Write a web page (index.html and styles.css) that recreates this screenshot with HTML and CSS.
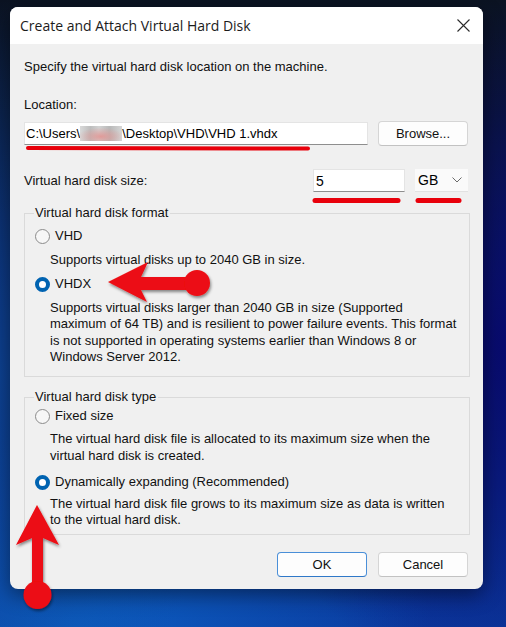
FILE: index.html
```html
<!DOCTYPE html>
<html>
<head>
<meta charset="utf-8">
<title>Create and Attach Virtual Hard Disk</title>
<link rel="stylesheet" href="styles.css">
</head>
<body>
<div class="desktop">
  <div class="dialog">
    <div class="titlebar">
      <span class="title">Create and Attach Virtual Hard Disk</span>
      <svg class="close" width="13" height="13" viewBox="0 0 13 13"><path d="M0.5 0.5 L12.5 12.5 M12.5 0.5 L0.5 12.5" stroke="#2b2b2b" stroke-width="1.1" fill="none"/></svg>
    </div>
    <div class="content">
      <p class="intro">Specify the virtual hard disk location on the machine.</p>
      <div class="label loc-label">Location:</div>
      <div class="row loc-row">
        <div class="input loc-input">C:\Users\<span class="blur"></span>\Desktop\VHD\VHD 1.vhdx</div>
        <button class="btn browse">Browse...</button>
      </div>
      <div class="row size-row">
        <span class="label size-label">Virtual hard disk size:</span>
        <div class="input size-input">5</div>
        <div class="select">GB<svg class="chev" width="10" height="6" viewBox="0 0 10 6"><path d="M0.5 0.5 L5 5 L9.5 0.5" stroke="#6a6a6a" stroke-width="1" fill="none"/></svg></div>
      </div>
      <fieldset class="group g1">
        <legend>Virtual hard disk format</legend>
        <div class="radio"><span class="dot"></span><span>VHD</span></div>
        <p class="desc d-vhd">Supports virtual disks up to 2040 GB in size.</p>
        <div class="radio r-vhdx"><span class="dot on"></span><span>VHDX</span></div>
        <p class="desc d-vhdx">Supports virtual disks larger than 2040 GB in size (Supported<br>maximum of 64 TB) and is resilient to power failure events. This format<br>is not supported in operating systems earlier than Windows 8 or<br>Windows Server 2012.</p>
      </fieldset>
      <fieldset class="group g2">
        <legend>Virtual hard disk type</legend>
        <div class="radio"><span class="dot"></span><span>Fixed size</span></div>
        <p class="desc d-fixed">The virtual hard disk file is allocated to its maximum size when the<br>virtual hard disk is created.</p>
        <div class="radio r-dyn"><span class="dot on"></span><span>Dynamically expanding (Recommended)</span></div>
        <p class="desc d-dyn">The virtual hard disk file grows to its maximum size as data is written<br>to the virtual hard disk.</p>
      </fieldset>
      <div class="buttons">
        <button class="btn ok">OK</button>
        <button class="btn">Cancel</button>
      </div>
    </div>
  </div>
  <svg class="annot" width="506" height="627" viewBox="0 0 506 627">
    <defs>
      <filter id="sh" x="-20%" y="-20%" width="140%" height="140%">
        <feDropShadow dx="1" dy="2" stdDeviation="1.6" flood-color="#000" flood-opacity="0.45"/>
      </filter>
    </defs>
    <g stroke="#e8000b" stroke-linecap="round" fill="none">
      <path d="M28 148 L308 148.5" stroke-width="4"/>
      <path d="M315 200.5 L398 200.5" stroke-width="5"/>
      <path d="M418 200.5 L459 200.5" stroke-width="5"/>
    </g>
    <g fill="#ec0a12" filter="url(#sh)">
      <polygon points="108,282 148,262 141,277 197,277 197,290 141,290 147,302"/>
      <circle cx="197" cy="283" r="13"/>
      <polygon points="37,505 59,545 43,538 43,595 32,595 32,538 16,545"/>
      <circle cx="37.5" cy="595" r="14"/>
    </g>
  </svg>
</div>
</body>
</html>
```

FILE: styles.css
```css
html, body {
  margin: 0;
  padding: 0;
}

body {
  width: 506px;
  height: 627px;
  overflow: hidden;
  font-family: "Liberation Sans", Arial, sans-serif;
  background:
    radial-gradient(ellipse 55% 55% at 100% 55%, rgba(8, 6, 110, 0.85) 0%, rgba(8, 6, 110, 0) 100%),
    radial-gradient(ellipse 45% 60% at 0% 60%, rgba(14, 70, 150, 0.85) 0%, rgba(14, 70, 150, 0) 100%),
    radial-gradient(ellipse 70% 40% at 15% 100%, rgba(12, 95, 195, 0.95) 0%, rgba(12, 95, 195, 0) 100%),
    linear-gradient(to bottom, #0b1322 0%, #0b1733 18%, #0a2160 45%, #0a2c88 75%, #0b3a9e 100%);
}

.desktop {
  position: relative;
  width: 506px;
  height: 627px;
  box-sizing: border-box;
  padding: 7px 0 0 10px;
}

.dialog {
  width: 473px;
  height: 582px;
  border-radius: 8px;
  overflow: hidden;
  background: #f0f0f0;
  box-shadow: 0 6px 20px rgba(0, 0, 0, 0.45);
  display: flex;
  flex-direction: column;
}

.titlebar {
  height: 37px;
  flex: none;
  background: #ffffff;
  display: flex;
  align-items: center;
  justify-content: space-between;
  padding: 0 13px 0 10px;
  font-family: "Open Sans", "Noto Sans", sans-serif;
  font-size: 14px;
  color: #1b1b1b;
}

.close {
  display: block;
}

.content {
  flex: 1;
  padding: 15px 13px 0 14px;
  font-size: 13px;
  line-height: 16px;
  color: #111111;
}

p {
  margin: 0;
}

.intro {
  white-space: nowrap;
}

.loc-label {
  margin-top: 22px;
}

.row {
  display: flex;
  align-items: center;
  margin-right: 2px;
}

.loc-row {
  margin-top: 8px;
  height: 25px;
  gap: 10px;
}

.input {
  height: 23px;
  box-sizing: border-box;
  background: #ffffff;
  border: 1px solid #e4e4e4;
  border-bottom-color: #8e8e8e;
  padding: 0 0 0 1px;
  display: flex;
  align-items: center;
  font-size: 14px;
  white-space: nowrap;
  color: #000;
}

.loc-input {
  width: 344px;
  font-size: 13px;
}

.blur {
  display: inline-block;
  width: 42px;
  height: 15px;
  background:
    radial-gradient(ellipse 55% 60% at 50% 70%, rgba(226, 150, 148, 0.9) 0%, rgba(226, 150, 148, 0) 100%),
    linear-gradient(90deg, #d9d9d9 0%, #bdbdbd 25%, #d2d2d2 45%, #b8b8b8 70%, #d6d6d6 100%);
}

.btn {
  font-family: "Liberation Sans", Arial, sans-serif;
  font-size: 13px;
  color: #111;
  height: 25px;
  width: 90px;
  box-sizing: border-box;
  background: #fdfdfd;
  border: 1px solid #d5d5d5;
  border-bottom-color: #c2c2c2;
  border-radius: 4px;
  padding: 0;
}

.size-row {
  margin-top: 23px;
  height: 23px;
  gap: 10px;
}

.size-label {
  flex: 1;
}

.size-input {
  width: 92px;
  padding-left: 2px;
}

.select {
  width: 53px;
  height: 23px;
  box-sizing: border-box;
  background: #fafafa;
  border-bottom: 1px solid #e2e2e2;
  display: flex;
  align-items: center;
  justify-content: space-between;
  padding: 0 6px 0 3px;
  font-size: 14px;
  color: #000;
}

.group {
  margin: 13px 0 0 0;
  padding: 7px 0 11px 9px;
  border: 1px solid #dadada;
  min-width: 0;
}

.group legend {
  padding: 0 2px 0 1px;
  line-height: 16px;
}

.radio {
  display: flex;
  align-items: center;
  gap: 5px;
  height: 16px;
  margin-left: 1px;
  white-space: nowrap;
}

.dot {
  width: 15px;
  height: 15px;
  box-sizing: border-box;
  border-radius: 50%;
  border: 1px solid #8b8b8b;
  background: #f7f7f7;
  flex: none;
}

.dot.on {
  border: 4px solid #0063b1;
  background: #ffffff;
}

.desc {
  margin-left: 16px;
  white-space: nowrap;
}

.d-vhd {
  margin-top: 8px;
}

.r-vhdx {
  margin-top: 8px;
}

.d-vhdx {
  margin-top: 8px;
  line-height: 16.33px;
}

.g2 {
  margin-top: 12px;
  padding-top: 3px;
  padding-bottom: 6px;
}

.d-fixed {
  margin-top: 7px;
  line-height: 16.5px;
}

.r-dyn {
  margin-top: 10px;
}

.d-dyn {
  margin-top: 6px;
}

.buttons {
  display: flex;
  justify-content: flex-end;
  gap: 11px;
  margin: 17px 2px 0 0;
}

.btn.ok {
  border: 1px solid #4a8fd8;
  border-bottom-color: #2f78c8;
}

.annot {
  position: absolute;
  left: 0;
  top: 0;
  pointer-events: none;
}
```
